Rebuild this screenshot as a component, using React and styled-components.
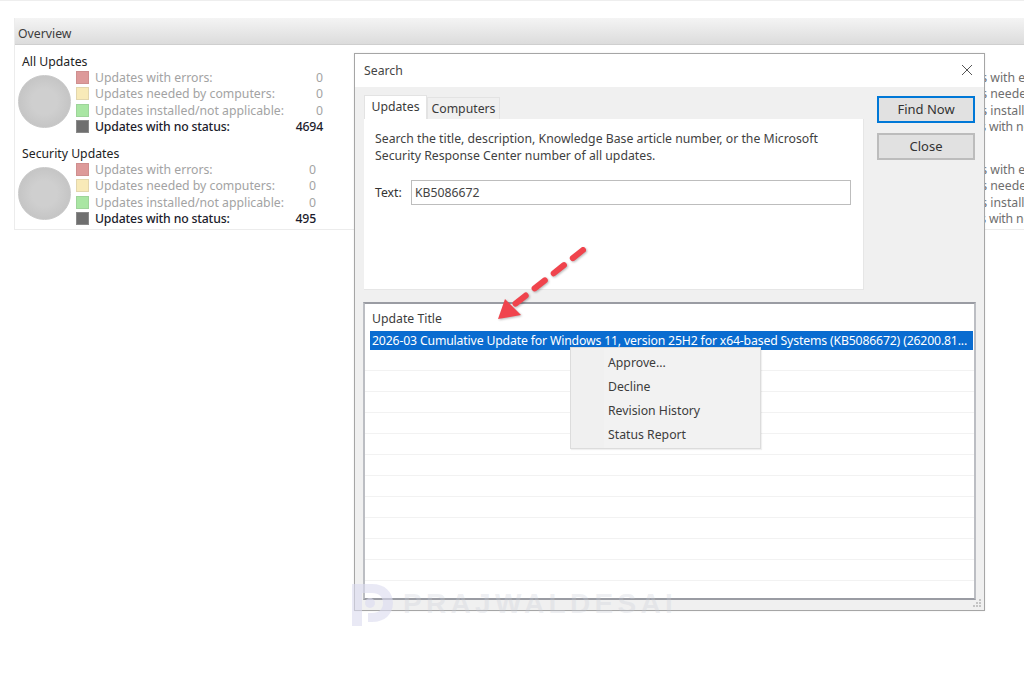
import React from 'react';
import styled, { createGlobalStyle } from 'styled-components';

const GlobalStyle = createGlobalStyle`
  html, body {
    margin: 0;
    padding: 0;
    background: #fff;
    overflow: hidden;
  }
  * { box-sizing: border-box; }
`;

const Page = styled.div`
  position: relative;
  width: 1024px;
  height: 689px;
  overflow: hidden;
  padding: 18px 0 0 14px;
  border-top: 1px solid #eeeeee;
  font-family: "Noto Sans", "Open Sans", sans-serif;
  font-size: 12.25px;
  color: #333;
`;

const Overview = styled.section`
  width: 1010px;
  height: 212px;
  margin-top: -1px;
  border-bottom: 1px solid #ececec;
  border-left: 1px solid #ececec;
`;

const OverviewHeader = styled.div`
  height: 27px;
  padding: 4px 3px 0;
  display: flex;
  align-items: center;
  background: linear-gradient(#f4f4f4, #dcdcdc);
  border-bottom: 1px solid #cfcfcf;
  color: #3c3c3c;
`;

const OverviewBody = styled.div`
  display: flex;
  gap: 534px;
  padding-top: 9px;
`;

const SummaryColumn = styled.div`
  flex: none;
  width: 310px;
  padding-left: 3px;
`;

const SummaryGroup = styled.div`
  margin-bottom: 11px;
`;

const GroupTitle = styled.div`
  height: 15px;
  line-height: 15px;
  padding-left: 4px;
  color: #222;
`;

const GroupBody = styled.div`
  display: flex;
  gap: 5px;
`;

const Pie = styled.div`
  flex: none;
  width: 53px;
  height: 53px;
  margin-top: 6px;
  border-radius: 50%;
  background: radial-gradient(circle, #cfcfcf 35%, #bdbdbd 100%);
  border: 1px solid #c8c8c8;
`;

const StatusList = styled.div`
  width: ${({ $width }) => $width}px;
`;

const StatusRow = styled.div`
  height: 16.5px;
  display: flex;
  align-items: center;
  color: ${({ $strong, $dim }) => ($dim ? '#6e6e6e' : $strong ? '#1c1c2c' : '#a3a3a3')};
  font-weight: ${({ $strong, $dim }) => ($strong && !$dim ? 500 : 400)};
  letter-spacing: ${({ $strong }) => ($strong ? '-0.17px' : '0')};
`;

const Swatch = styled.span`
  flex: none;
  width: 13px;
  height: 13px;
  margin-right: 6px;
  background: ${({ $color }) => $color};
  border: 1px solid ${({ $edge }) => $edge};
`;

const StatusCount = styled.span`
  margin-left: auto;
`;

const Dialog = styled.div`
  position: absolute;
  left: 354px;
  top: 52px;
  width: 631px;
  height: 558px;
  display: flex;
  flex-direction: column;
  background: #f0f0f0;
  border: 1px solid #a6a6a6;
  box-shadow: 0 0 2px rgba(0, 0, 0, 0.08);
  color: #333;
`;

const TitleBar = styled.div`
  flex: none;
  height: 33px;
  display: flex;
  align-items: center;
  justify-content: space-between;
  padding: 0 11px 1px 9px;
  background: #fff;
  color: #444;
`;

const CloseX = styled.svg`
  width: 12px;
  height: 12px;
  stroke: #555;
  stroke-width: 1;
  fill: none;
`;

const DialogBody = styled.div`
  flex: 1;
  min-height: 0;
  display: flex;
  flex-direction: column;
  gap: 12px;
  padding: 8px 8px 10px;
`;

const TopRow = styled.div`
  flex: none;
  display: flex;
  gap: 13px;
  padding-left: 1px;
`;

const TabArea = styled.div`
  width: 500px;
`;

const TabStrip = styled.div`
  display: flex;
  align-items: flex-end;
  height: 24px;
`;

const Tab = styled.div`
  display: flex;
  align-items: center;
  justify-content: center;
  width: ${({ $active }) => ($active ? '63px' : '73px')};
  height: ${({ $active }) => ($active ? '24px' : '22px')};
  padding-bottom: ${({ $active }) => ($active ? '2px' : '0')};
  background: ${({ $active }) => ($active ? '#fff' : '#f0f0f0')};
  border: 1px solid #e3e3e3;
  border-bottom: none;
  color: #3a3a3a;
`;

const TabPanel = styled.div`
  height: 171px;
  padding: 11px 11px 0;
  background: #fff;
  border-bottom: 1px solid #e6e6e6;
  border-right: 1px solid #e6e6e6;
`;

const Description = styled.p`
  margin: 0;
  line-height: 17px;
  color: #3f3f3f;
`;

const TextField = styled.div`
  display: flex;
  align-items: center;
  margin-top: 16px;
  margin-right: 1px;
`;

const FieldLabel = styled.span`
  flex: none;
  width: 36px;
  padding-bottom: 1px;
`;

const FieldInput = styled.div`
  flex: 1;
  height: 25px;
  display: flex;
  align-items: center;
  padding: 0 3px 1px;
  background: #fff;
  border: 1px solid #bdbdbd;
  color: #444;
`;

const ButtonColumn = styled.div`
  display: flex;
  flex-direction: column;
  gap: 10px;
  width: 98px;
  padding-top: 1px;
`;

const DialogButton = styled.div`
  height: 27px;
  display: flex;
  align-items: center;
  justify-content: center;
  padding-bottom: 1px;
  font-size: 13px;
  background: #e1e1e1;
  border: ${({ $primary }) => ($primary ? '2px solid #0078d7' : '2px solid #bcbcbc')};
  color: #333;
`;

const ResultList = styled.div`
  flex: 1;
  min-height: 0;
  overflow: hidden;
  background: #fff;
  border: 2px solid #bcbec3;
  border-top-color: #9a9ca3;
  border-bottom-color: #9a9ca3;
`;

const ListHeader = styled.div`
  height: 27px;
  padding: 6px 0 0 7px;
  line-height: 18px;
  color: #3c3c3c;
`;

const ListRow = styled.div`
  height: ${({ $selected }) => ($selected ? '19px' : '21px')};
  margin: ${({ $selected }) => ($selected ? '0 1px 0 5px' : '0')};
  padding-left: 2px;
  line-height: 19px;
  letter-spacing: ${({ $selected }) => ($selected ? '-0.16px' : '0')};
  white-space: nowrap;
  overflow: hidden;
  background: ${({ $selected }) => ($selected ? '#0a6cd0' : '#fff')};
  color: #fff;
  border-bottom: ${({ $selected }) => ($selected ? 'none' : '1px solid #f2f2f2')};
`;

const ContextMenu = styled.div`
  position: absolute;
  left: 215px;
  top: 293px;
  width: 191px;
  height: 102px;
  padding: 3px 0;
  background: linear-gradient(90deg, #f0f0f0 33px, #f2f2f2 33px);
  border: 1px solid #dcdcdc;
  box-shadow: 1px 1px 1px rgba(0, 0, 0, 0.06);
`;

const MenuItem = styled.div`
  height: 24px;
  line-height: 24px;
  padding-left: 37px;
  color: #3c3c3c;
`;

const Grip = styled.svg`
  position: absolute;
  right: 2px;
  bottom: 2px;
  width: 10px;
  height: 10px;
  fill: #c4c4c4;
`;

const Arrow = styled.svg`
  position: absolute;
  left: 490px;
  top: 240px;
  width: 105px;
  height: 90px;
  filter: drop-shadow(1px 1px 1px rgba(0, 0, 0, 0.28));
`;

const Watermark = styled.div`
  position: absolute;
  left: 352px;
  top: 581px;
  display: flex;
  align-items: center;
  gap: 10px;
  pointer-events: none;
`;

const WatermarkLogo = styled.svg`
  width: 41px;
  height: 44px;
  fill: #dcdcf0;
  opacity: 0.6;
`;

const WatermarkText = styled.span`
  font-family: "Liberation Sans", Arial, sans-serif;
  font-size: 28px;
  font-weight: 700;
  letter-spacing: 4.3px;
  color: rgba(200, 204, 214, 0.3);
`;

const statuses = [
  { label: 'Updates with errors:', color: '#dd9a9a', edge: '#cf8f8f' },
  { label: 'Updates needed by computers:', color: '#f8eab8', edge: '#e2d6ae' },
  { label: 'Updates installed/not applicable:', color: '#a9e6a3', edge: '#9ed49a' },
];

function Summary({ title, total, width, dim }) {
  return (
    <SummaryGroup>
      <GroupTitle>{title}</GroupTitle>
      <GroupBody>
        <Pie />
        <StatusList $width={width}>
          {statuses.map((s) => (
            <StatusRow key={s.label} $dim={dim}>
              <Swatch $color={s.color} $edge={s.edge} />
              {s.label}
              <StatusCount>0</StatusCount>
            </StatusRow>
          ))}
          <StatusRow $strong $dim={dim}>
            <Swatch $color="#6f6f6f" $edge="#8a8a8a" />
            Updates with no status:
            <StatusCount>{total}</StatusCount>
          </StatusRow>
        </StatusList>
      </GroupBody>
    </SummaryGroup>
  );
}

function SummaryBlock({ dim }) {
  return (
    <SummaryColumn>
      <Summary title="All Updates" total="4694" width={247} dim={dim} />
      <Summary title="Security Updates" total="495" width={240} dim={dim} />
    </SummaryColumn>
  );
}

const emptyRows = Array.from({ length: 12 }, (_, i) => i);

export default function App() {
  return (
    <>
      <GlobalStyle />
      <Page>
        <Overview>
          <OverviewHeader>Overview</OverviewHeader>
          <OverviewBody>
            <SummaryBlock />
            <SummaryBlock dim />
          </OverviewBody>
        </Overview>

        <Dialog>
          <TitleBar>
            Search
            <CloseX viewBox="0 0 12 12">
              <path d="M1 1 L11 11 M11 1 L1 11" />
            </CloseX>
          </TitleBar>
          <DialogBody>
            <TopRow>
              <TabArea>
                <TabStrip>
                  <Tab $active>Updates</Tab>
                  <Tab>Computers</Tab>
                </TabStrip>
                <TabPanel>
                  <Description>
                    Search the title, description, Knowledge Base article number, or the Microsoft
                    <br />
                    Security Response Center number of all updates.
                  </Description>
                  <TextField>
                    <FieldLabel>Text:</FieldLabel>
                    <FieldInput>KB5086672</FieldInput>
                  </TextField>
                </TabPanel>
              </TabArea>
              <ButtonColumn>
                <DialogButton $primary>Find Now</DialogButton>
                <DialogButton>Close</DialogButton>
              </ButtonColumn>
            </TopRow>
            <ResultList>
              <ListHeader>Update Title</ListHeader>
              <ListRow $selected>
                2026-03 Cumulative Update for Windows 11, version 25H2 for x64-based Systems (KB5086672) (26200.81...
              </ListRow>
              {emptyRows.map((i) => (
                <ListRow key={i} />
              ))}
            </ResultList>
          </DialogBody>
          <ContextMenu>
            <MenuItem>Approve...</MenuItem>
            <MenuItem>Decline</MenuItem>
            <MenuItem>Revision History</MenuItem>
            <MenuItem>Status Report</MenuItem>
          </ContextMenu>
          <Grip viewBox="0 0 10 10">
            <rect x="7" y="1" width="2" height="2" />
            <rect x="4" y="4" width="2" height="2" />
            <rect x="7" y="4" width="2" height="2" />
            <rect x="1" y="7" width="2" height="2" />
            <rect x="4" y="7" width="2" height="2" />
            <rect x="7" y="7" width="2" height="2" />
          </Grip>
        </Dialog>

        <Arrow viewBox="0 0 105 90">
          <line
            x1="93"
            y1="9"
            x2="20"
            y2="67"
            stroke="#f0444d"
            strokeWidth="6"
            strokeLinecap="round"
            strokeDasharray="13 11.4"
          />
          <polygon points="8,78 15,58 31,74" fill="#f0444d" />
        </Arrow>

        <Watermark>
          <WatermarkLogo viewBox="0 0 41 44">
            <path d="M0 2 H20 C33 2 41 10 41 21 C41 32 33 40 20 40 H16 V31 H20 C27 31 31 27 31 21 C31 15 27 11 20 11 H10 V44 H0 Z" />
            <circle cx="18" cy="21" r="5" />
          </WatermarkLogo>
          <WatermarkText>PRAJWALDESAI</WatermarkText>
        </Watermark>
      </Page>
    </>
  );
}
